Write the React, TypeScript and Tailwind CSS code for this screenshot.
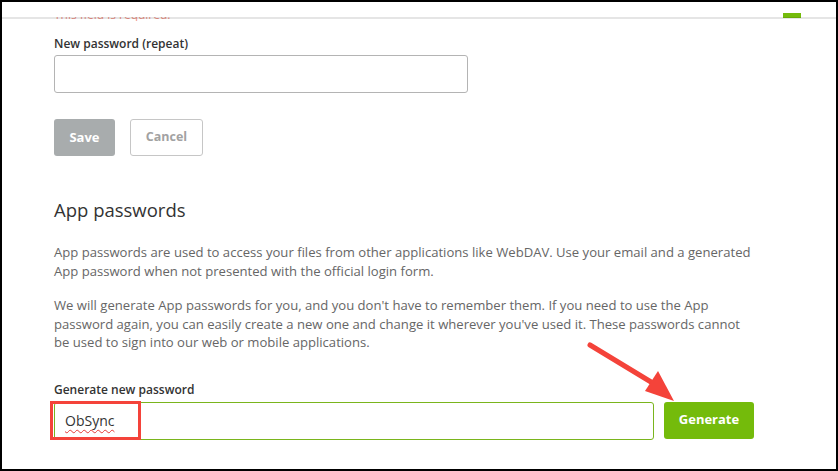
import { FC } from "react";

const Arrow: FC = () => (
  <svg
    className="pointer-events-none absolute -left-[2px] -top-[2px]"
    width={838}
    height={471}
    viewBox="0 0 838 471"
  >
    <line x1={590} y1={345} x2={656} y2={385} stroke="#f4433a" strokeWidth={5} strokeLinecap="round" />
    <polygon points="645,391 658,371 674,401" fill="#f4433a" />
  </svg>
);

const App: FC = (): JSX.Element => {
  return (
    <div className="relative h-[471px] w-[838px] overflow-hidden border-2 border-black bg-white font-['Open_Sans',sans-serif]">
      {/* Top bar */}
      <div className="relative z-10 h-[15px] bg-white">
        <div className="absolute left-[781px] top-[11px] h-[5px] w-[18px] bg-[#74bb0b]" />
        <div className="absolute -bottom-[2px] left-0 right-0 h-[2px] bg-black/10" />
      </div>

      <div className="flex flex-col pl-[52px]">
        {/* error text, mostly hidden under the bar */}
        <div className="h-[4px] overflow-hidden">
          <p className="-mt-[9px] text-[12px] leading-[14px] text-[#f0958a]">This field is required.</p>
        </div>

        {/* Repeat password */}
        <label className="mt-[14px] text-[12px] font-semibold leading-[18px] text-[#333]">
          New password (repeat)
        </label>
        <div className="mt-[2px] h-[38px] w-[414px] rounded-[3px] border border-[#b4b4b4]" />

        <div className="mt-[26px] flex gap-[15px]">
          <button className="h-[37px] w-[61px] rounded-[3px] bg-[#a8acad] text-[13px] font-bold text-white">
            Save
          </button>
          <button className="h-[37px] w-[73px] rounded-[3px] border border-[#c6c6c6] bg-white text-[12.5px] font-bold text-[#a2a2a2]">
            Cancel
          </button>
        </div>

        {/* App passwords */}
        <h2 className="mt-[40px] text-[18.5px] font-normal leading-[28px] text-[#333]">App passwords</h2>
        <p className="mt-[19px] w-[700px] text-[13.1px] leading-[18.5px] text-[#666]">
          App passwords are used to access your files from other applications like WebDAV. Use your email and a generated
          App password when not presented with the official login form.
        </p>
        <p className="mt-[16px] w-[700px] text-[13.1px] leading-[18.5px] text-[#666]">
          We will generate App passwords for you, and you don't have to remember them. If you need to use the App
          password again, you can easily create a new one and change it wherever you've used it. These passwords cannot
          be used to sign into our web or mobile applications.
        </p>

        <label className="mt-[29px] text-[12px] font-semibold leading-[18px] text-[#333]">Generate new password</label>
        <div className="mt-[3px] flex gap-[10px]">
          <div className="relative flex h-[38px] w-[600px] items-center rounded-[3px] border border-[#7ab51d] px-[10px]">
            <span className="text-[14px] text-[#333] underline decoration-[#e53935] decoration-wavy decoration-1 underline-offset-[3px]">
              ObSync
            </span>
            <div className="absolute -left-[5px] -top-[2px] h-[39px] w-[91px] border-[3px] border-[#f4433a]" />
          </div>
          <button className="h-[37px] w-[90px] rounded-[3px] bg-[#74bb0b] text-[13px] font-bold text-white">
            Generate
          </button>
        </div>
      </div>

      <Arrow />
    </div>
  );
};

export default App;
